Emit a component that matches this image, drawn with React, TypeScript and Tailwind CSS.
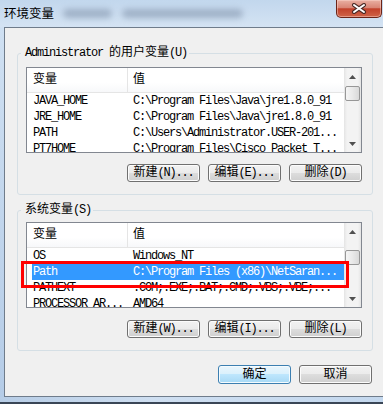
import React from "react";

const CJK = /([\u4e00-\u9fff]+)/;

// latin runs keep the tight mono spacing, CJK runs get normal spacing
function T({ s }: { s: string }) {
  return (
    <>
      {s.split(CJK).map((p, i) =>
        i % 2 === 1 ? (
          <span key={i} className="tracking-normal">
            {p}
          </span>
        ) : (
          p && <span key={i}>{p}</span>
        )
      )}
    </>
  );
}

function Button({ label, primary = false, tall = false }: { label: string; primary?: boolean; tall?: boolean }) {
  return (
    <div
      className={
        "w-[73px] flex items-center justify-center rounded-[3px] border whitespace-nowrap text-black " +
        (tall ? "h-[19px] " : "h-[18px] ") +
        (primary
          ? "border-[#3c7fb1] bg-[linear-gradient(180deg,#eaf6fd_0%,#d9f0fc_50%,#bee6fd_50%,#a7d9f5_100%)] shadow-[inset_0_0_0_1px_#f4fbfe]"
          : "border-[#707070] bg-[linear-gradient(180deg,#f2f2f2_0%,#ebebeb_50%,#dddddd_50%,#cfcfcf_100%)] shadow-[inset_0_0_0_1px_#fcfcfc]")
      }
    >
      <T s={label} />
    </div>
  );
}

function Arrow({ down = false }: { down?: boolean }) {
  return (
    <div className={"h-[17px] shrink-0 flex items-center justify-center " + (down ? "mt-auto" : "")}>
      <svg width="7" height="4" viewBox="0 0 7 4">
        <polygon points={down ? "0,0 7,0 3.5,4" : "0,4 7,4 3.5,0"} fill="#505050" />
      </svg>
    </div>
  );
}

function ScrollBar({ thumb }: { thumb: string }) {
  return (
    <div className="w-[17px] shrink-0 flex flex-col bg-[linear-gradient(90deg,#e4e4e4_0%,#f3f3f3_18%,#f3f3f3_82%,#e4e4e4_100%)]">
      <Arrow />
      <div
        className={
          "mx-[1px] h-[15px] shrink-0 rounded-[2px] border border-[#979797] bg-[linear-gradient(90deg,#f5f5f5_0%,#e9e9e9_50%,#d9d9d9_100%)] " +
          thumb
        }
      />
      <Arrow down />
    </div>
  );
}

type Row = [string, string];

function List({ rows, selected = -1, thumb }: { rows: Row[]; selected?: number; thumb: string }) {
  return (
    <div className="h-[86px] w-full flex overflow-hidden border border-[#828790] bg-white">
      <div className="flex-1 min-w-0 flex flex-col overflow-hidden">
        <div className="h-[25px] shrink-0 flex border-b border-[#e5e5e5] bg-[linear-gradient(180deg,#ffffff_0%,#ffffff_60%,#f7f8fa_100%)]">
          <div className="w-[101px] pl-[6px] flex items-center border-r border-[#e5e5e5] tracking-normal">变量</div>
          <div className="pl-[5px] flex items-center tracking-normal">值</div>
        </div>
        {rows.map(([name, value], i) => (
          <div
            key={name}
            className={
              "h-[16px] shrink-0 ml-[5px] flex items-center whitespace-nowrap " +
              (i === selected ? "bg-[#3399ff] text-white" : "text-black")
            }
          >
            <div className="w-[100px] pl-[1px] overflow-hidden">{name}</div>
            <div className="flex-1 pl-[1px] overflow-hidden">{value}</div>
          </div>
        ))}
      </div>
      <ScrollBar thumb={thumb} />
    </div>
  );
}

const userVars: Row[] = [
  ["JAVA_HOME", "C:\\Program Files\\Java\\jre1.8.0_91"],
  ["JRE_HOME", "C:\\Program Files\\Java\\jre1.8.0_91"],
  ["PATH", "C:\\Users\\Administrator.USER-201..."],
  ["PT7HOME", "C:\\Program Files\\Cisco Packet T..."],
];

const sysVars: Row[] = [
  ["OS", "Windows_NT"],
  ["Path", "C:\\Program Files (x86)\\NetSaran..."],
  ["PATHEXT", ".COM;.EXE;.BAT;.CMD;.VBS;.VBE;..."],
  ["PROCESSOR_AR...", "AMD64"],
];

export default function App() {
  return (
    <div className="w-[383px] h-[404px] overflow-hidden flex flex-col bg-[#c6d9ee] font-['Liberation_Mono','Noto_Sans_CJK_SC',monospace] text-[12px] leading-[16px] tracking-[-1.2px]">
      {/* title bar */}
      <div className="h-[27px] shrink-0 flex items-start bg-[linear-gradient(180deg,#c2d7ed_0%,#d4e3f3_100%)]">
        <span className="pl-[4px] pt-[5px] text-[12.5px] leading-[16px] tracking-normal text-black font-['Noto_Sans_CJK_SC',sans-serif]">
          环境变量
        </span>
        <div className="ml-[9px] mt-[9px] h-[9px] w-[49px] rounded-full bg-[#8193ab] opacity-60 blur-[3px]" />
        <div className="ml-[10px] mt-[9px] h-[9px] w-[121px] rounded-full bg-[#8193ab] opacity-60 blur-[3px]" />
        <div className="ml-auto mr-[1px] h-[18px] w-[46px] flex items-center justify-center rounded-b-[5px] border border-t-0 border-[#6b2418] bg-[linear-gradient(180deg,#e9b0a3_0%,#d98575_45%,#c2412b_52%,#cf6448_100%)] shadow-[inset_0_0_0_1px_rgba(255,220,210,0.45)]">
          <svg width="16" height="11" viewBox="0 0 16 11">
            <path d="M3 2 L13 9 M13 2 L3 9" stroke="#4a2a26" strokeWidth="4" strokeLinecap="round" />
            <path d="M3 2 L13 9 M13 2 L3 9" stroke="#ffffff" strokeWidth="2" strokeLinecap="round" />
          </svg>
        </div>
      </div>

      <div className="flex flex-1 min-h-0">
        <div className="w-[4px] shrink-0 bg-[linear-gradient(180deg,#cfe0f2_0%,#b5cce7_100%)]" />
        {/* client area */}
        <div className="flex-1 flex flex-col pl-[12px] bg-[#f0f0f0] border-l border-t border-b border-[#6f7c8b]">
          <fieldset className="mt-[18px] w-[356px] rounded-[3px] border border-[#d5dfe5] pl-[8px] pr-[10px] pt-[6px] pb-[12px]">
            <legend className="ml-[-5px] pl-[4px] pr-[2px] leading-[15px] text-black">
              <T s="Administrator 的用户变量(U)" />
            </legend>
            <List rows={userVars} thumb="mt-[1px]" />
            <div className="mt-[11px] flex justify-end gap-[8px]">
              <Button label="新建(N)..." />
              <Button label="编辑(E)..." />
              <Button label="删除(D)" />
            </div>
          </fieldset>

          <fieldset className="mt-[8px] w-[356px] rounded-[3px] border border-[#d5dfe5] pl-[8px] pr-[10px] pt-[4px] pb-[12px]">
            <legend className="ml-[-5px] pl-[4px] pr-[2px] leading-[15px] text-black">
              <T s="系统变量(S)" />
            </legend>
            <div className="relative">
              <List rows={sysVars} selected={1} thumb="mt-[10px]" />
              <div className="absolute left-[-5px] top-[39px] w-[328px] h-[27px] border-[3px] border-[#ff0000]" />
            </div>
            <div className="mt-[12px] flex justify-end gap-[8px]">
              <Button label="新建(W)..." />
              <Button label="编辑(I)..." />
              <Button label="删除(L)" />
            </div>
          </fieldset>

          <div className="mt-[14px] w-[356px] pr-[1px] flex justify-end gap-[8px]">
            <Button label="确定" primary tall />
            <Button label="取消" tall />
          </div>
        </div>
      </div>

      <div className="h-[7px] shrink-0 flex flex-col">
        <div className="h-[5px] bg-[linear-gradient(90deg,#b7cde6_0%,#cfdff1_40%,#c4d8ee_100%)]" />
        <div className="h-[2px] bg-[#3a4656]" />
      </div>
    </div>
  );
}
